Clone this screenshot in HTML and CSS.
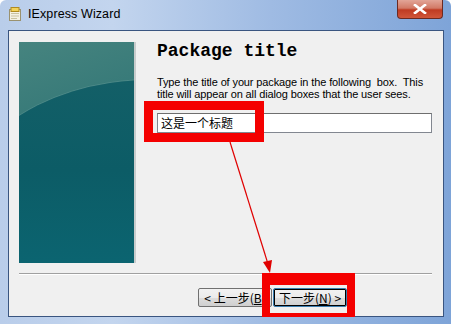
FILE: index.html
```html
<!DOCTYPE html>
<html>
<head>
<meta charset="utf-8">
<link rel="stylesheet" href="styles.css">
</head>
<body>
<div class="window">
  <div class="titlebar">
    <svg class="app-icon" width="12" height="14" viewBox="0 0 12 14">
      <rect x="0.5" y="2.5" width="11" height="11" fill="#f4f1e4" stroke="#9a9270"/>
      <rect x="2" y="0.5" width="8" height="4" fill="#f3d35a" stroke="#b08a20"/>
      <rect x="2" y="6" width="8" height="1" fill="#c9c2a0"/>
      <rect x="2" y="8.5" width="8" height="1" fill="#c9c2a0"/>
      <rect x="2" y="11" width="6" height="1" fill="#c9c2a0"/>
    </svg>
    <span class="title">IExpress Wizard</span>
    <div class="close"><svg width="14" height="10" viewBox="0 0 14 10"><path d="M2 1 L12 9 M12 1 L2 9" stroke="#fff" stroke-width="2.6" stroke-linecap="square"/></svg></div>
  </div>
  <div class="client">
    <div class="main">
      <div class="banner"></div>
      <div class="content">
        <h1 class="heading">Package title</h1>
        <p class="desc">Type the title of your package in the following  box.  This
title will appear on all dialog boxes that the user sees.</p>
        <div class="field">这是一个标题</div>
      </div>
    </div>
    <div class="sep"></div>
    <div class="buttons">
      <div class="btn">&lt; 上一步(<u>B</u>)</div>
      <div class="btn default">下一步(<u>N</u>) &gt;</div>
    </div>
  </div>
  <div class="mark mark-field"></div>
  <div class="mark mark-next"></div>
  <svg class="arrow" width="451" height="324" viewBox="0 0 451 324">
    <line x1="230" y1="142" x2="268" y2="264" stroke="#e00000" stroke-width="1.2"/>
    <polygon points="270,273 263,262 272,260" fill="#e00000"/>
  </svg>
</div>
</body>
</html>
```
FILE: styles.css
```css
html, body {
  margin: 0;
  padding: 0;
  background: #ffffff;
}
.window {
  position: relative;
  width: 451px;
  height: 324px;
  box-sizing: border-box;
  background: linear-gradient(to right, #b9cdea 0%, #c3d5ee 25%, #9fbbe3 60%, #7ea4d8 100%);
  border-radius: 6px 6px 0 0;
  display: flex;
  flex-direction: column;
  overflow: hidden;
  font-family: "Liberation Sans", Arial, sans-serif;
}
.titlebar {
  height: 30px;
  display: flex;
  align-items: flex-start;
  flex-shrink: 0;
}
.app-icon {
  margin: 7px 0 0 9px;
}
.title {
  margin: 7px 0 0 7px;
  font-size: 12.5px;
  color: #000;
  letter-spacing: 0.1px;
}
.close {
  margin-left: auto;
  margin-right: 8px;
  width: 46px;
  height: 19px;
  box-sizing: border-box;
  border: 1px solid #6b2a22;
  border-top: none;
  border-radius: 0 0 4px 4px;
  background: linear-gradient(to bottom, #e2a597 0%, #d27a66 45%, #bf3b22 55%, #d0563a 100%);
  display: flex;
  align-items: center;
  justify-content: center;
}
.client {
  margin: 0 7px 0 8px;
  height: 287px;
  box-sizing: border-box;
  background: #f0f0f0;
  border: 1px solid #3a5580;
  display: flex;
  flex-direction: column;
}
.main {
  display: flex;
  height: 242px;
}
.banner {
  margin: 11px 0 0 10px;
  width: 117px;
  height: 221px;
  box-sizing: border-box;
  border-right: 2px solid #c8cccc;
  background: linear-gradient(160deg, #46847f 0%, #367978 35%, #2c7170 60%);
  position: relative;
  overflow: hidden;
}
.banner::before {
  content: "";
  position: absolute;
  left: -70px;
  top: 38px;
  width: 400px;
  height: 300px;
  border-radius: 50%;
  background: linear-gradient(to bottom, #135f67 0%, #0c5c66 30%, #0b6470 60%, #0b6a77 100%);
  box-shadow: 0 -1px 0 rgba(110,160,160,0.35);
}
.content {
  margin-left: 21px;
  width: 275px;
  padding-top: 9px;
}
.heading {
  margin: 0;
  font-family: "Liberation Mono", "Courier New", monospace;
  font-weight: bold;
  font-size: 18px;
  line-height: 22px;
  color: #000;
}
.desc {
  margin: 14px 0 0 0;
  font-size: 11px;
  line-height: 12px;
  letter-spacing: -0.12px;
  white-space: pre;
  color: #000;
}
.field {
  margin-top: 13px;
  width: 275px;
  height: 20px;
  box-sizing: border-box;
  border: 1px solid #828790;
  border-top-color: #6e6e6e;
  background: #fff;
  font-family: "Noto Sans CJK SC", sans-serif;
  font-size: 12px;
  line-height: 18px;
  padding-left: 3px;
  color: #000;
}
.sep {
  margin: 0 11px 0 10px;
  height: 0;
  border-top: 1px solid #a0a0a0;
  border-bottom: 1px solid #ffffff;
}
.buttons {
  display: flex;
  margin: 13px 0 0 189px;
  gap: 1px;
}
.btn {
  width: 74px;
  height: 19px;
  box-sizing: border-box;
  border: 1px solid #707070;
  border-radius: 2px;
  background: linear-gradient(to bottom, #f2f2f2 0%, #ebebeb 50%, #dddddd 51%, #cfcfcf 100%);
  font-family: "Noto Sans CJK SC", sans-serif;
  font-size: 12px;
  line-height: 17px;
  text-align: center;
  color: #000;
}
.btn u {
  text-decoration: underline;
}
.btn.default {
  border: 1px solid #3c7fb1;
  box-shadow: inset 0 0 0 1px #000;
}
.mark {
  position: absolute;
  box-sizing: border-box;
  border: 9px solid #f40000;
}
.mark-field {
  left: 144px;
  top: 101px;
  width: 120px;
  height: 41px;
}
.mark-next {
  left: 262px;
  top: 273px;
  width: 93px;
  height: 44px;
  border-width: 12px 8px 4px 8px;
}
.arrow {
  position: absolute;
  left: 0;
  top: 0;
  pointer-events: none;
}
```
